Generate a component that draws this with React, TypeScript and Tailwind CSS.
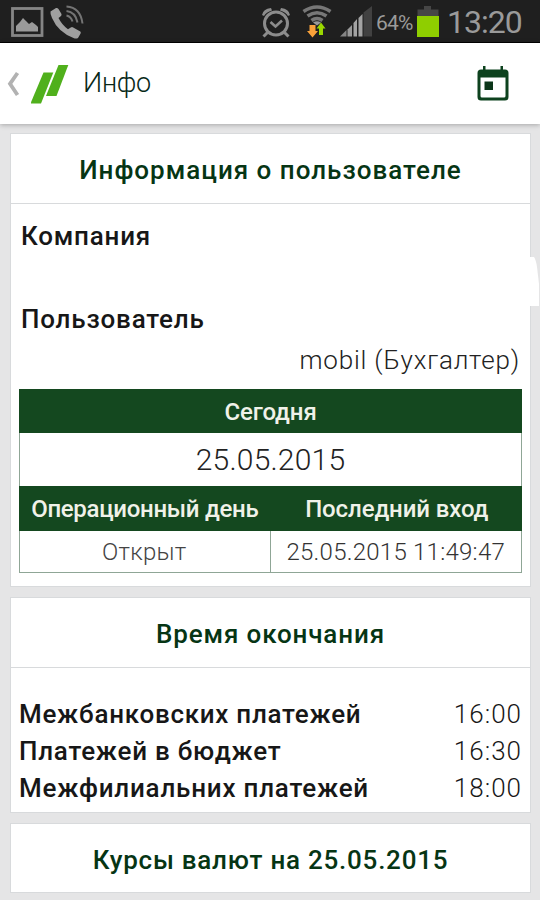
import React from 'react';

const StatusBar: React.FC = () => (
  <div className="h-[43px] bg-[#1f1f1f] border-b border-black flex items-center text-[#9a9a9a]">
    <svg width="34" height="42" viewBox="0 0 34 42" className="ml-[10px] shrink-0">
      <rect x="2.500" y="8.500" width="29.500" height="27" fill="none" stroke="#858585" strokeWidth="2.800" />
      <path d="M6 31.500V26l4-4 3-4 3 3 3 3 3-2 4 3 2 2v4.500z" fill="#9a9a9a" />
    </svg>
    <svg width="36" height="42" viewBox="0 0 36 42" className="ml-[6px] shrink-0">
      <path d="M.5 11.500 6 8q1.500-.5 2.500 1l3 5q.4 1.400-.8 2.300L8.500 18q3.500 7 9.500 11.200l2.800-1.800q1.200-.8 2.400 0l7.100 4.100q.8.800.3 1.900L28 38q-2 1.200-4.500 0Q8 32 2 18 0 14 .5 11.500z" fill="#a0a0a0" />
      <path d="M16.500 6.500q14 1 16 17M16.500 11q9 1 11 11.500M16.500 15.500q4.500 1 6 6" fill="none" stroke="#747474" strokeWidth="2" />
    </svg>
    <svg width="30" height="42" viewBox="0 0 30 42" className="ml-[175px] shrink-0" fill="none" stroke="#8c8c8c">
      <circle cx="15" cy="23.500" r="11.500" strokeWidth="3" />
      <path d="m9.500 22 5 4.500 6.500-6" strokeWidth="2.600" />
      <path d="m7 32-4.500 4.500M23 32l4.500 4.500" strokeWidth="3" />
      <path d="M1 15q1-6 9-7l1 2.500Q5 12 3 16zM29 15q-1-6-9-7l-1 2.500q6 1.500 8 5.500z" fill="#8c8c8c" stroke="none" />
    </svg>
    <svg width="32" height="42" viewBox="0 0 32 42" className="ml-[10px] shrink-0" fill="none" stroke="#777">
      <path d="M2.500 11.500q13.500-9 27 0M6.500 16q9.500-6.500 19 0M10.500 20.500q5.500-4 11 0" strokeWidth="3.600" />
      <path d="m12 22.500 4 3 4-3q-4-2.500-8 0z" fill="#999" stroke="none" />
      <path d="M8.500 25h6v6h2.500L11.500 37.500l-5.500-6.500h2.500z" fill="#f9a13a" stroke="none" />
      <path d="m20 22.500 4.500 6h-2.500V35H18v-6.500h-2.500z" fill="#9ad800" stroke="none" />
    </svg>
    <svg width="34" height="42" viewBox="0 0 34 42" className="ml-[7px] shrink-0">
      <path d="M0 36.500 6.500 30v6.500z" fill="#858585" />
      <path d="M7.500 36.500V29.500l4.500-4.500v11.500z" fill="#999" />
      <path d="M13.500 36.500V23l3.500-4v17.500z" fill="#a3a3a3" />
      <path d="M18.500 36.500V18l4-4v22.500z" fill="#a3a3a3" />
      <path d="M23.500 36.500V12.500L32 6v30.500z" fill="#414141" />
    </svg>
    <span className="ml-[2px] w-[41px] shrink-0 text-[21px] leading-[42px] whitespace-nowrap tracking-[-0.8px] mt-[4px]">64%</span>
    <svg width="22" height="42" viewBox="0 0 22 42" className="shrink-0">
      <path d="M7 6h7v3.500h7.500V16H.5V9.500H7z" fill="#464646" />
      <path d="M0 16h22v21H0z" fill="#8fce00" />
    </svg>
    <span className="ml-[8px] text-[32px] leading-[42px] whitespace-nowrap tracking-[-1px] mt-[2px]">13:20</span>
  </div>
);

const ActionBar: React.FC = () => (
  <div className="h-[81px] bg-white flex items-center relative shadow-[0_1px_5px_rgba(0,0,0,0.28)]">
    <svg width="14" height="26" viewBox="0 0 14 26" className="ml-[7px] shrink-0">
      <path d="M10.500 2 3 12.800 10.500 24" fill="none" stroke="#b2b2b2" strokeWidth="3.800" />
    </svg>
    <svg width="38" height="40" viewBox="0 0 38 40" className="ml-[10px] shrink-0">
      <path d="M12.500 8.500h9.800L10 39.500H-.5z" fill="#50b01c" />
      <path d="M27.500 1H37.300L25.500 32H15z" fill="#50b01c" />
    </svg>
    <h1 className="ml-[14px] text-[27px] leading-[32px] font-light text-[#082818] tracking-[-0.3px] -mt-[2px]">Инфо</h1>
    <svg width="32" height="36" viewBox="0 0 32 36" className="ml-auto mr-[31px] shrink-0">
      <path d="M4 3.500h2V0h2.500v3.500h15V0H26v3.500h2q3.500 0 3.500 3.500v24q0 3.500-3.500 3.500H4q-3.500 0-3.500-3.500V7q0-3.500 3.500-3.500zM3.500 11.500v18.500q0 1.500 1.500 1.500h22q1.500 0 1.500-1.500V11.500z" fill="#0d421e" fillRule="evenodd" />
      <path d="M7.500 15.500H16V24H7.500z" fill="#0b3619" />
    </svg>
  </div>
);

const Card: React.FC<{ title: React.ReactNode; className?: string; children?: React.ReactNode }> = ({ title, className = '', children }) => (
  <section className={`ml-[10px] mr-[9px] bg-white border border-[#d8dadc] shrink-0 ${className}`}>
    <h2 className="h-[69px] pt-[4px] flex items-center justify-center text-[26px] font-medium text-[#063514] whitespace-nowrap">{title}</h2>
    {children}
  </section>
);

const cutoffs = [
  { name: 'Межбанковских платежей', time: '16:00', spacing: 'tracking-[0.73px]' },
  { name: 'Платежей в бюджет', time: '16:30', spacing: 'tracking-[0.76px]' },
  { name: 'Межфилиальних платежей', time: '18:00', spacing: 'tracking-[0.78px]' },
];

const App: React.FC = () => (
  <div className="w-[540px] h-[900px] overflow-hidden bg-[#e5e5e6] flex flex-col font-['Roboto',sans-serif]">
    <StatusBar />
    <ActionBar />
    <main className="pt-[9px] flex flex-col relative">
      <Card title={<span className="tracking-[1px]">Информация о пользователе</span>} className="h-[454px]">
        <div className="border-t border-[#d8dadc] px-[10px] pt-[15px]">
          <div className="text-[26px] leading-[34px] h-[83px] font-medium text-[#171717]"><span className="tracking-[0.8px]">Компания</span></div>
          <div className="text-[26px] leading-[34px] h-[41px] font-medium text-[#171717]"><span className="tracking-[0.8px]">Пользователь</span></div>
          <div className="text-[26px] leading-[34px] h-[46px] font-light text-[#222] text-right"><span className="tracking-[0.8px]">mobil (Бухгалтер)</span></div>
          <div className="-ml-[2px] w-[503px] h-[184px] border border-[#8fa696] grid grid-cols-2 grid-rows-[43px_53px_45px_41px] text-center text-[24px] whitespace-nowrap">
            <div className="col-span-2 -mx-px -mt-px bg-[#14481f] text-[#f0f2e9] leading-[46px] font-medium tracking-[-0.1px]">Сегодня</div>
            <div className="col-span-2 text-[#222] text-[30px] leading-[54px] font-light tracking-[0.2px]">25.05.2015</div>
            <div className="-ml-px bg-[#14481f] text-[#f0f2e9] leading-[46px] font-medium tracking-[-0.3px]">Операционный день</div>
            <div className="-mr-px bg-[#14481f] text-[#f0f2e9] leading-[46px] font-medium tracking-[-0.1px] pl-px">Последний вход</div>
            <div className="border-r border-[#8fa696] pr-px text-[#444] leading-[43px] font-light tracking-[0.3px]">Открыт</div>
            <div className="text-[#333] leading-[43px] font-light tracking-[0.25px]">25.05.2015 11:49:47</div>
          </div>
        </div>
      </Card>
      <Card title={<span className="tracking-[0.85px]">Время окончания</span>} className="mt-[10px] h-[216px]">
        <div className="border-t border-[#d8dadc] pt-[27px] px-[8px]">
          {cutoffs.map(c => (
            <div key={c.name} className="h-[37px] flex justify-between text-[26px] leading-[38px] text-[#171717] whitespace-nowrap">
              <span className={`font-medium ${c.spacing}`}>{c.name}</span>
              <span className="font-light tracking-[1px]">{c.time}</span>
            </div>
          ))}
        </div>
      </Card>
      <Card title={<span className="tracking-[0.75px]">Курсы валют на 25.05.2015</span>} className="mt-[10px] h-[70px]" />
      {/* drawer handle on the right edge */}
      <svg width="12" height="50" viewBox="0 0 12 50" className="absolute right-0 top-[133px]">
        <path d="M0 0h6q2 3 3 10l2 17v22H0z" fill="#fff" />
      </svg>
    </main>
  </div>
);

export default App;
